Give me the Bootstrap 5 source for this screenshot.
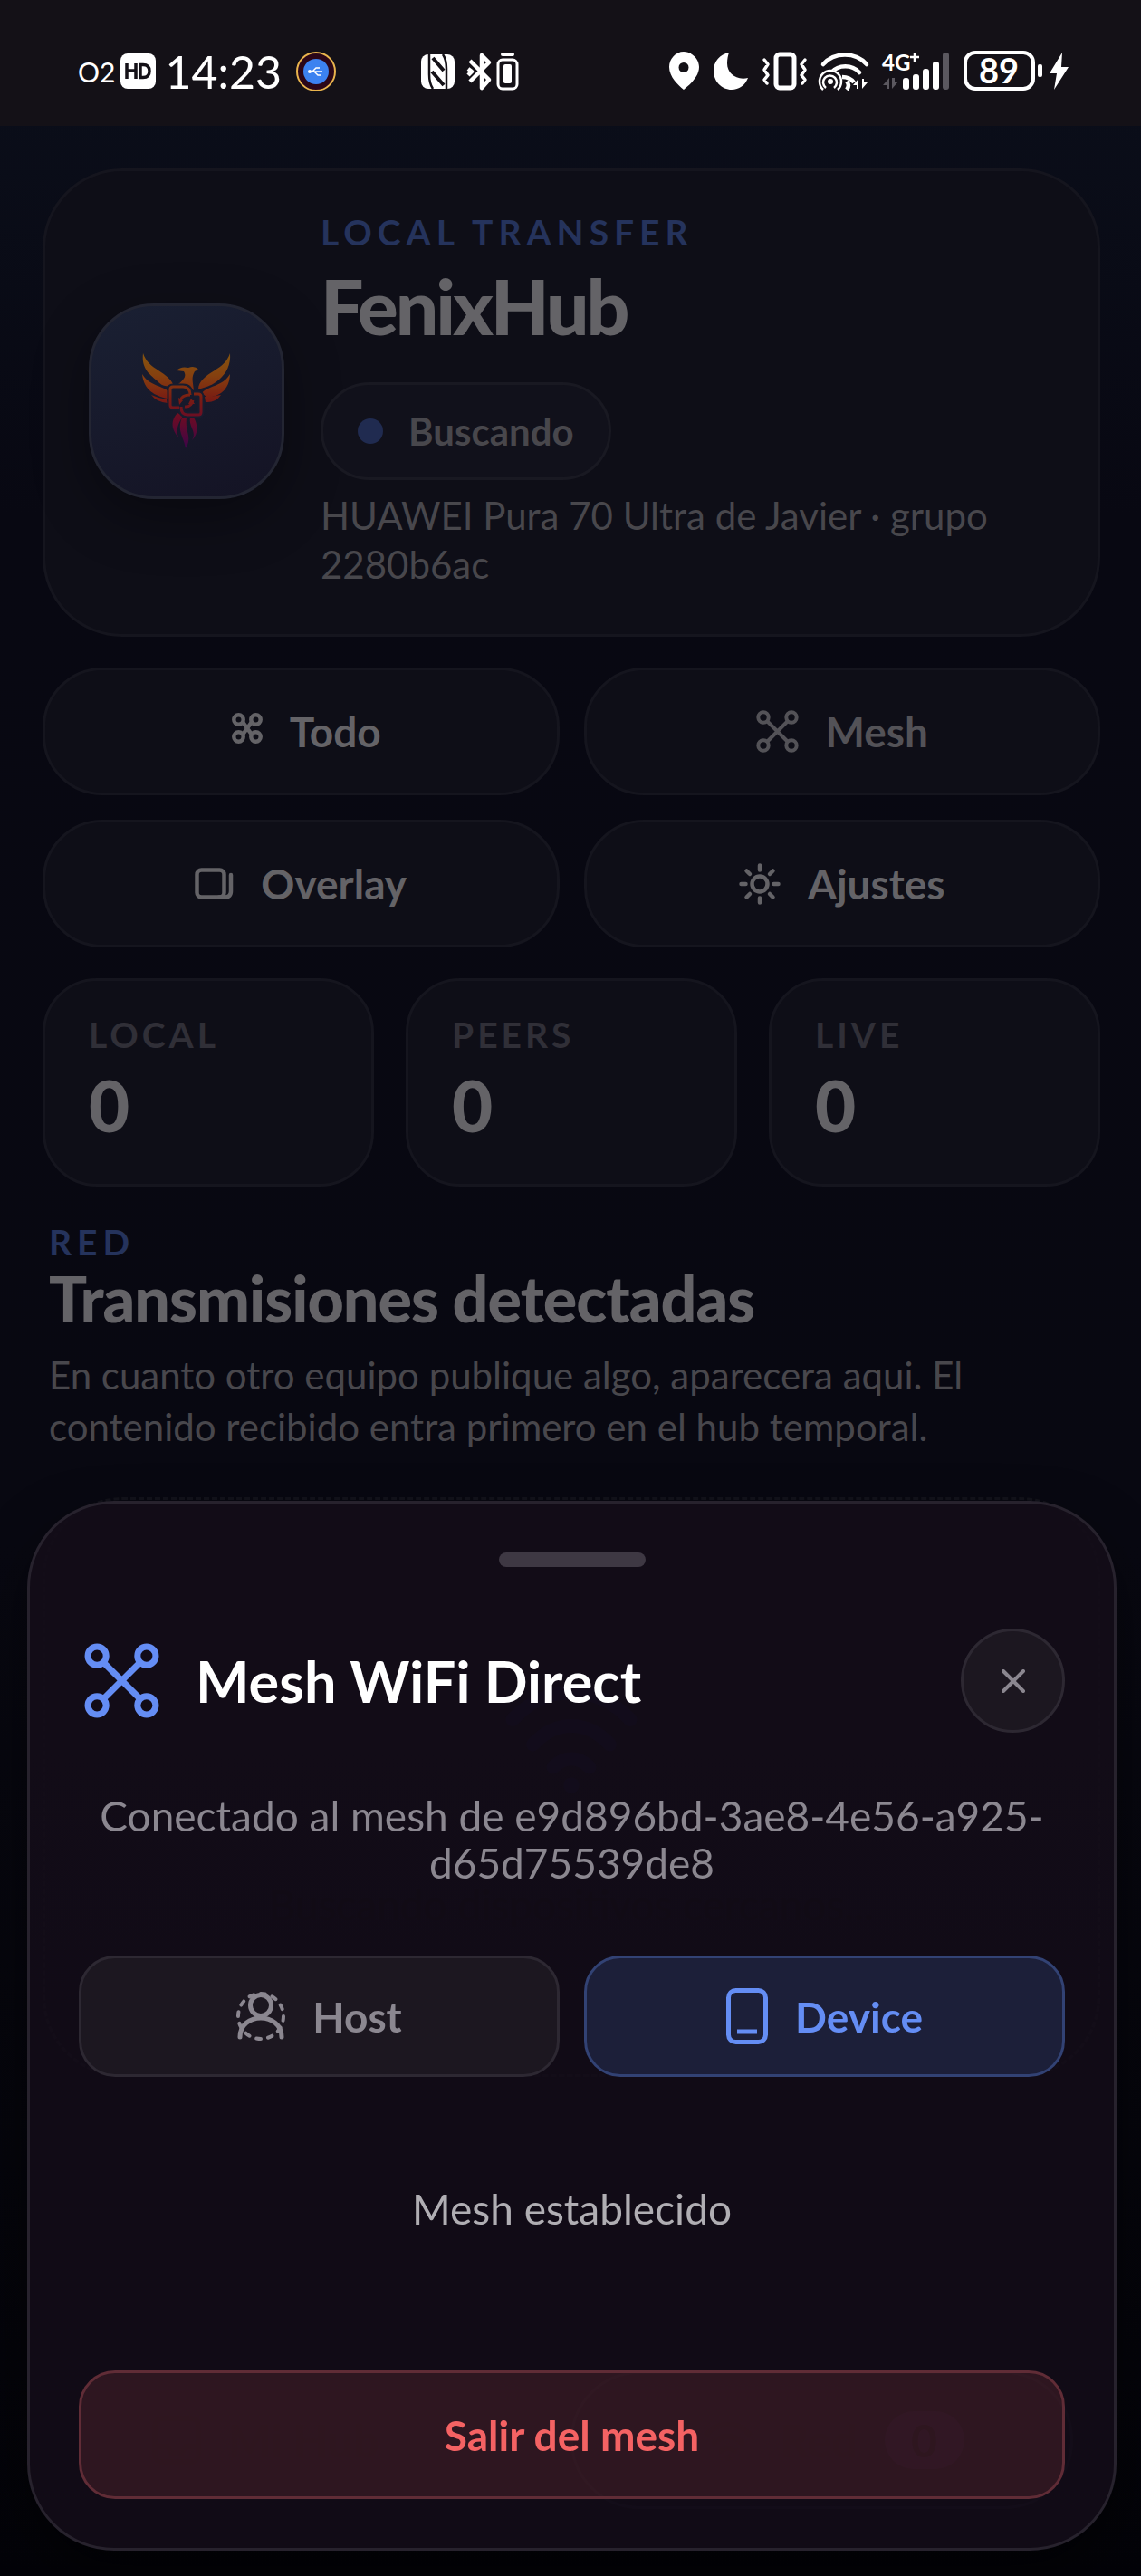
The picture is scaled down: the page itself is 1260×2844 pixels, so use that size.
<!DOCTYPE html>
<html lang="es">
<head>
  <meta charset="UTF-8">
  <meta name="viewport" content="width=device-width, initial-scale=1.0">
  <title>FenixHub</title>
  <link rel="stylesheet" href="https://cdn.jsdelivr.net/npm/bootstrap@5.3.3/dist/css/bootstrap.min.css">
  <style>
    body {
      font-family: Lato, "Liberation Sans", sans-serif;
      font-size: 42px;
      line-height: 54px;
      background: linear-gradient(#0b0f1b, #080812 20%, #080811 60%, #030308);
      color: #48474c;
      min-height: 100vh;
    }
    .status-bar {
      height: 139px;
      padding: 18px 80px 0 86px;
      background: #141117;
      color: #fff;
    }
    .carrier { font-size: 30px; margin-right: 6px; }
    .clock { font-size: 50px; margin: 0 16px 0 10px; }
    .radio-icons { margin-left: 94px; }
    .hub { padding: 47px 45px 0 47px; }
    .panel {
      background: #0e0e17;
      border: 3px solid #15151e;
      border-radius: 88px;
    }
    .hero { padding: 47px 48px 50px; gap: 40px; }
    .logo-tile {
      width: 216px;
      height: 216px;
      border: 3px solid #232532;
      border-radius: 72px;
      background: linear-gradient(160deg, #1a2033, #141324);
      box-shadow: 0 20px 60px rgba(0,0,0,.35);
    }
    .eyebrow {
      color: #25335c;
      font-size: 39px;
      font-weight: 700;
      letter-spacing: 6px;
      line-height: 40px;
    }
    h1, h2 { color: #646367; margin: 0; }
    h1 { font-size: 84px; font-weight: 900; line-height: 124px; letter-spacing: -3px; }
    .section-head { padding: 41px 7px 0; }
    .section-head h2 { font-size: 70px; font-weight: 900; line-height: 84px; letter-spacing: -1px; }
    .section-head p { line-height: 57px; margin: 15px 0 0; }
    .chip {
      width: fit-content;
      height: 108px;
      margin: 22px 0 12px;
      padding: 0 38px;
      gap: 28px;
      background: #11111b;
      border: 3px solid #191922;
      font-weight: 700;
    }
    .dot { width: 28px; height: 28px; background: #202b50; }
    .two-cols { display: grid; grid-template-columns: 1fr 1fr; gap: 27px; }
    .three-cols { display: grid; grid-template-columns: 1fr 1fr 1fr; gap: 35px; }
    .block-gap { margin-top: 34px; }
    .action, .role {
      --bs-btn-border-width: 3px;
      --bs-btn-font-size: 46px;
      --bs-btn-font-weight: 700;
      display: flex;
      align-items: center;
      justify-content: center;
      gap: 30px;
    }
    .action {
      --bs-btn-color: #646367;
      --bs-btn-bg: #0e0e17;
      --bs-btn-border-color: #15151e;
      --bs-btn-border-radius: 66px;
      height: 141px;
    }
    .action-dim { --bs-btn-color: #535257; }
    .stat { border-radius: 60px; padding: 35px 48px; height: 230px; }
    .stat-label {
      color: #302f37;
      font-size: 39px;
      font-weight: 700;
      letter-spacing: 4px;
      line-height: 48px;
    }
    .stat-value { color: #646367; font-size: 78px; font-weight: 900; line-height: 108px; }
    .empty {
      height: 640px;
      margin-top: 49px;
      padding-top: 200px;
      border: 3px dashed #13131b;
      border-radius: 88px;
      color: #000;
      font-size: 46px;
      gap: 95px;
    }
    .tabs {
      position: fixed;
      left: 48px;
      right: 75px;
      bottom: 74px;
      color: #000;
      font-size: 50px;
      font-weight: 700;
    }
    .tab { height: 152px; gap: 30px; padding-left: 120px; }
    .tab-on { padding-left: 144px; border: 3px solid #14141c; border-radius: 76px; }
    .count { width: 88px; height: 64px; line-height: 64px; background: #1b0c2a; }
    .sheet {
      position: fixed;
      left: 30px;
      right: 27px;
      bottom: 28px;
      padding: 54px;
      background: rgba(20,13,24,.86);
      border: 3px solid #27222d;
      border-radius: 96px;
      box-shadow: 0 30px 60px rgba(0,0,0,.5);
      color: #8b8790;
      font-size: 46px;
      line-height: 52px;
    }
    .handle { width: 162px; height: 16px; margin-bottom: 68px; background: #3e3843; }
    .sheet-head { gap: 34px; margin-bottom: 66px; }
    .sheet-head h2 { color: #fff; font-size: 63px; font-weight: 700; line-height: 76px; }
    .close-btn {
      width: 115px;
      height: 115px;
      color: #8b8790;
      background: #1c1720;
      border: 3px solid #2d2832;
    }
    .sheet-copy { margin-bottom: 76px; }
    .role {
      --bs-btn-color: #8b8790;
      --bs-btn-bg: #1c1720;
      --bs-btn-border-color: #2d2832;
      --bs-btn-border-radius: 40px;
      height: 134px;
    }
    .role-on {
      --bs-btn-color: #648df4;
      --bs-btn-bg: #1c1f39;
      --bs-btn-border-color: #324274;
    }
    .leave {
      --bs-btn-color: #f46263;
      --bs-btn-bg: rgba(244,98,99,.13);
      --bs-btn-border-color: #602c36;
      height: 142px;
    }
    .established { color: #b0aeb3; padding: 120px 0 152px; }
  </style>
</head>
<body>
  <svg class="d-none">
    <symbol id="i-mesh" viewBox="0 0 47 47">
      <g fill="none" stroke="currentColor" stroke-width="4"><circle cx="8" cy="8" r="5.700"/><circle cx="39" cy="8" r="5.700"/><circle cx="8" cy="39" r="5.700"/><circle cx="39" cy="39" r="5.700"/><path d="M12 12l23 23M35 12L12 35"/></g>
    </symbol>
    <symbol id="i-wifi" viewBox="0 0 60 50">
      <g fill="none" stroke="currentColor" stroke-width="6" stroke-linecap="round"><path d="M4 17c15-16 37-16 52 0M13 28c10-11 24-11 34 0M22 38c5-5 11-5 16 0"/></g><circle cx="30" cy="46" r="3.500" fill="currentColor"/>
    </symbol>
  </svg>

  <header class="status-bar d-flex align-items-center">
    <div class="d-flex align-items-center">
      <span class="carrier">O2</span>
      <svg width="39" height="39" viewBox="0 0 39 39"><rect width="39" height="39" rx="8" fill="#fff"/><path d="M7 11v17M17 11v17M7 19h10M22 12.500v14h3c5 0 7-2.500 7-7s-2-7-7-7z" fill="none" stroke="#141117" stroke-width="3.500"/></svg>
      <span class="clock">14:23</span>
      <svg width="44" height="44" viewBox="0 0 44 44"><circle cx="22" cy="22" r="21" fill="#2b0718" stroke="#e9b44d" stroke-width="2"/><circle cx="22" cy="22" r="14" fill="#3c82f0"/><g fill="none" stroke="#fff" stroke-width="1.500"><path d="M14 22h15M18 22l4-4h4M20 22l4 4h3"/></g><circle cx="15" cy="22" r="2" fill="#fff"/></svg>
    </div>
    <svg class="radio-icons flex-shrink-0" width="108" height="44" viewBox="0 0 108 44">
      <rect x="0" y="3" width="37" height="38" rx="8" fill="#fff"/>
      <g fill="none" stroke="#141117" stroke-width="2.500"><path d="M9 3v22q0 10 4 16M28 41V19q0-10-4-16"/><path d="M13 7l12 14M12 22l13 15" stroke-width="4"/></g>
      <path d="M54 10l21 21-8 9V4l8 8-21 21M52 19l4 3-4 4" fill="none" stroke="#fff" stroke-width="4.500" stroke-linejoin="round"/>
      <rect x="85" y="9" width="21" height="32" rx="5" fill="none" stroke="#fff" stroke-width="3"/><rect x="91" y="14" width="9" height="21" rx="2" fill="#fff"/><rect x="88" y="1" width="15" height="4" rx="2" fill="#fff"/>
    </svg>
    <svg class="ms-auto flex-shrink-0" width="444" height="48" viewBox="736 55 444 48" font-family="Lato, sans-serif" fill="#fff">
      <path fill-rule="evenodd" d="M755 57c-9 0-16 8-16 17 0 11 10 20 16 25 6-5 17-14 17-25 0-9-8-17-17-17zm0 12a5.500 5.500 0 1 1 0 11 5.500 5.500 0 0 1 0-11z"/>
      <path d="M805 58c-10 2-17 10-17 20 0 12 9 21 20 21 8 0 15-5 18-13-13 3-23-5-23-16 0-5 1-9 2-12z"/>
      <g fill="none" stroke="#fff" stroke-width="4.500"><rect x="857" y="60" width="20" height="37" rx="4" stroke-width="5"/><path d="M844 66l4 5-4 6 4 6-4 5 3 4M889 66l-4 5 4 6-4 6 4 5-3 4" stroke-linecap="round" stroke-linejoin="round" stroke-width="3.500"/>
      <path d="M909 71c12-14 36-14 48 0M918 80c8-9 23-9 31 0" stroke-linecap="round"/><path d="M930 85c5 0 10 2 13 6M935 90q4 4 0 9"/></g>
      <circle cx="917" cy="90" r="13" fill="#141117"/><circle cx="917" cy="90" r="3"/><path d="M912 97a7.500 7.500 0 1 1 9 0M909 99a12 12 0 1 1 16 0" fill="none" stroke="#fff" stroke-width="2.500"/>
      <path d="M948 98V87l-6 7h4v4zM952 87v11l6-7h-4v-4z"/>
      <text x="974" y="78" font-size="24" font-weight="700">4G</text><path d="M1010 58v10M1005 63h10" stroke="#fff" stroke-width="2.500"/>
      <g fill="#5b585f"><path d="M982 98V86l-7 8h4v4zM985 86v12l7-8h-4v-4z"/><rect x="1041" y="58" width="7" height="41" rx="3"/></g>
      <rect x="997" y="86" width="7" height="13" rx="3"/><rect x="1008" y="82" width="7" height="17" rx="3"/><rect x="1019" y="76" width="7" height="23" rx="3"/><rect x="1030" y="68" width="7" height="31" rx="3"/>
      <rect x="1066" y="58" width="75" height="40" rx="11" fill="none" stroke="#fff" stroke-width="4"/><rect x="1146" y="71" width="5" height="14" rx="2"/>
      <text x="1103" y="92" font-size="38" font-weight="700" text-anchor="middle">89</text>
      <path d="M1173 58l-14 23h8l-3 18 16-25h-8z"/>
    </svg>
  </header>

  <main class="hub">
    <section class="panel hero d-flex align-items-center">
      <div class="logo-tile d-flex align-items-center justify-content-center flex-shrink-0">
        <svg width="100" height="108" viewBox="26 31 100 108">
          <defs><linearGradient id="fire" x1="0" y1="30" x2="0" y2="137" gradientUnits="userSpaceOnUse"><stop stop-color="#85570f"/><stop offset=".25" stop-color="#85400f"/><stop offset=".48" stop-color="#7a1d12"/><stop offset=".7" stop-color="#690b26"/><stop offset="1" stop-color="#3b0549"/></linearGradient></defs>
          <g fill="url(#fire)">
            <path d="M28 32c3 9 9 14 17 19 8 5 14 10 16 15l-5 2c-5 1-8-1-13-6C35 55 26 49 28 32z"/>
            <path d="M27 55c5 9 15 12 22 15 5 2 8 4 8 7l-2 5c-14-3-26-9-28-27z"/><path d="M37 78q9 4 17 5l1 4q-12-1-18-9z"/>
            <path d="M124 32c-3 9-9 14-17 19-10 6-18 12-18 21l6-2c7-2 11-4 17-9 8-7 13-16 12-29z"/>
            <path d="M124 55c-5 9-15 12-22 15-5 2-8 4-9 6l6 5c14-2 24-8 25-26z"/><path d="M114 78q-9 2-18 2l1 6q11 1 17-8z"/>
            <path d="M67 66c7-6 9-9 6-14l-8-1q5-5 13-3 7-3 11 2l-4 2c-4 7-2 11-1 21-3-3-4-6-9-7z"/>
            <path d="M66 98c-10 11-4 21 1 27-4-11 2-18 5-24zM71 103c-6 15 2 21 4 34 8-13-1-17 1-34zM80 103c-2 10 8 16 2 25 8-8 6-18 2-25z"/>
          </g>
          <g fill="none" stroke="#181c2e" stroke-width="7"><path d="M68 92h-7q-3 0-3-3V72q0-3 3-3h11q8 0 8 9M84 77h5q3 0 3 3v17q0 3-3 3H77q-7 0-7-9"/></g>
          <g fill="none" stroke="url(#fire)" stroke-width="3"><path d="M68 92h-7q-3 0-3-3V72q0-3 3-3h11q8 0 8 9M84 77h5q3 0 3 3v17q0 3-3 3H77q-7 0-7-9M69 84q2-6 11-6M83 84q-2 8-9 7"/></g>
          <path d="M67 81l5 3-4 5zM81 82l4 6-7 0z" fill="url(#fire)"/>
        </svg>
      </div>
      <div>
        <div class="eyebrow">LOCAL TRANSFER</div>
        <h1>FenixHub</h1>
        <div class="chip d-flex align-items-center rounded-pill"><span class="dot rounded-circle"></span>Buscando</div>
        <div>HUAWEI Pura 70 Ultra de Javier · grupo 2280b6ac</div>
      </div>
    </section>

    <div class="two-cols block-gap">
      <button type="button" class="btn action">
        <svg width="46" height="42" viewBox="-12 0 46 42" fill="none" stroke="currentColor" stroke-width="4.500"><circle cx="7.500" cy="7.500" r="5.200"/><circle cx="26.500" cy="7.500" r="5.200"/><circle cx="7.500" cy="26.500" r="5.200"/><circle cx="26.500" cy="26.500" r="5.200"/><path d="M12 10l10 14M22 10L12 24"/></svg>
        Todo
      </button>
      <button type="button" class="btn action action-dim">
        <svg width="47" height="47"><use href="#i-mesh"/></svg>
        Mesh
      </button>
      <button type="button" class="btn action">
        <svg width="43" height="35" viewBox="0 0 43 35" fill="none" stroke="currentColor" stroke-width="4.500" stroke-linecap="round"><rect x="2.500" y="2.500" width="30" height="30" rx="5"/><path d="M40 8v18q0 6.500-7 6.500h-6"/></svg>
        Overlay
      </button>
      <button type="button" class="btn action">
        <svg width="46" height="46" viewBox="0 0 46 46" fill="none" stroke="currentColor" stroke-width="4.500" stroke-linecap="round"><circle cx="23" cy="23" r="8.500"/><path d="M23 2.500v5M23 38.500v5M2.500 23h5M38.500 23h5M8.500 8.500l3.500 3.500M34 34l3.500 3.500M8.500 37.500L12 34M34 12l3.500-3.500"/></svg>
        Ajustes
      </button>
    </div>

    <div class="three-cols block-gap">
      <div class="panel stat"><div class="stat-label">LOCAL</div><div class="stat-value">0</div></div>
      <div class="panel stat"><div class="stat-label">PEERS</div><div class="stat-value">0</div></div>
      <div class="panel stat"><div class="stat-label">LIVE</div><div class="stat-value">0</div></div>
    </div>

    <section class="section-head">
      <div class="eyebrow">RED</div>
      <h2>Transmisiones detectadas</h2>
      <p>En cuanto otro equipo publique algo, aparecera aqui. El contenido recibido entra primero en el hub temporal.</p>
    </section>

    <div class="empty d-flex flex-column align-items-center">
      <svg width="150" height="125" color="#0c0c2c"><use href="#i-wifi"/></svg>
      <span>Buscando dispositivos cercanos...</span>
    </div>
  </main>

  <nav class="tabs two-cols">
    <div class="tab d-flex align-items-center">
      <svg width="54" height="54" viewBox="0 0 54 54" fill="none" stroke="currentColor" stroke-width="5"><rect x="3" y="3" width="48" height="48" rx="8"/><path d="M4 34h13l4 7h12l4-7h13"/></svg>
      Mi Hub
    </div>
    <div class="tab tab-on d-flex align-items-center">
      <svg width="54" height="45"><use href="#i-wifi"/></svg>
      Red
      <span class="count rounded-pill text-center">0</span>
    </div>
  </nav>

  <section class="sheet" role="dialog" aria-labelledby="meshTitle">
    <div class="handle rounded-pill mx-auto"></div>
    <div class="sheet-head d-flex align-items-center">
      <svg width="95" height="83" color="#648df4"><use href="#i-mesh"/></svg>
      <h2 id="meshTitle">Mesh WiFi Direct</h2>
      <button type="button" class="close-btn rounded-circle ms-auto p-0 d-flex align-items-center justify-content-center" aria-label="Cerrar">
        <svg width="26" height="26" viewBox="0 0 26 26" fill="none" stroke="currentColor" stroke-width="4" stroke-linecap="round"><path d="M2 2l22 22M24 2L2 24"/></svg>
      </button>
    </div>
    <p class="sheet-copy text-center">Conectado al mesh de e9d896bd-3ae8-4e56-a925-d65d75539de8</p>
    <div class="two-cols">
      <button type="button" class="btn role">
        <svg width="54" height="58" viewBox="0 0 54 58" fill="none" stroke="currentColor"><circle cx="27" cy="29" r="25" stroke-width="4" stroke-linecap="round" stroke-dasharray="5 8"/><circle cx="27" cy="17" r="11.500" stroke-width="5"/><path d="M4 52c0-28 46-28 46 0" stroke-width="5" stroke-linecap="round"/></svg>
        Host
      </button>
      <button type="button" class="btn role role-on">
        <svg width="46" height="62" viewBox="0 0 46 62" fill="none" stroke="currentColor" stroke-width="5"><rect x="2.500" y="2.500" width="41" height="57" rx="8"/><path d="M12 48h22"/></svg>
        Device
      </button>
    </div>
    <div class="established text-center">Mesh establecido</div>
    <button type="button" class="btn role leave w-100">Salir del mesh</button>
  </section>

  <script src="https://cdn.jsdelivr.net/npm/bootstrap@5.3.3/dist/js/bootstrap.bundle.min.js"></script>
</body>
</html>
